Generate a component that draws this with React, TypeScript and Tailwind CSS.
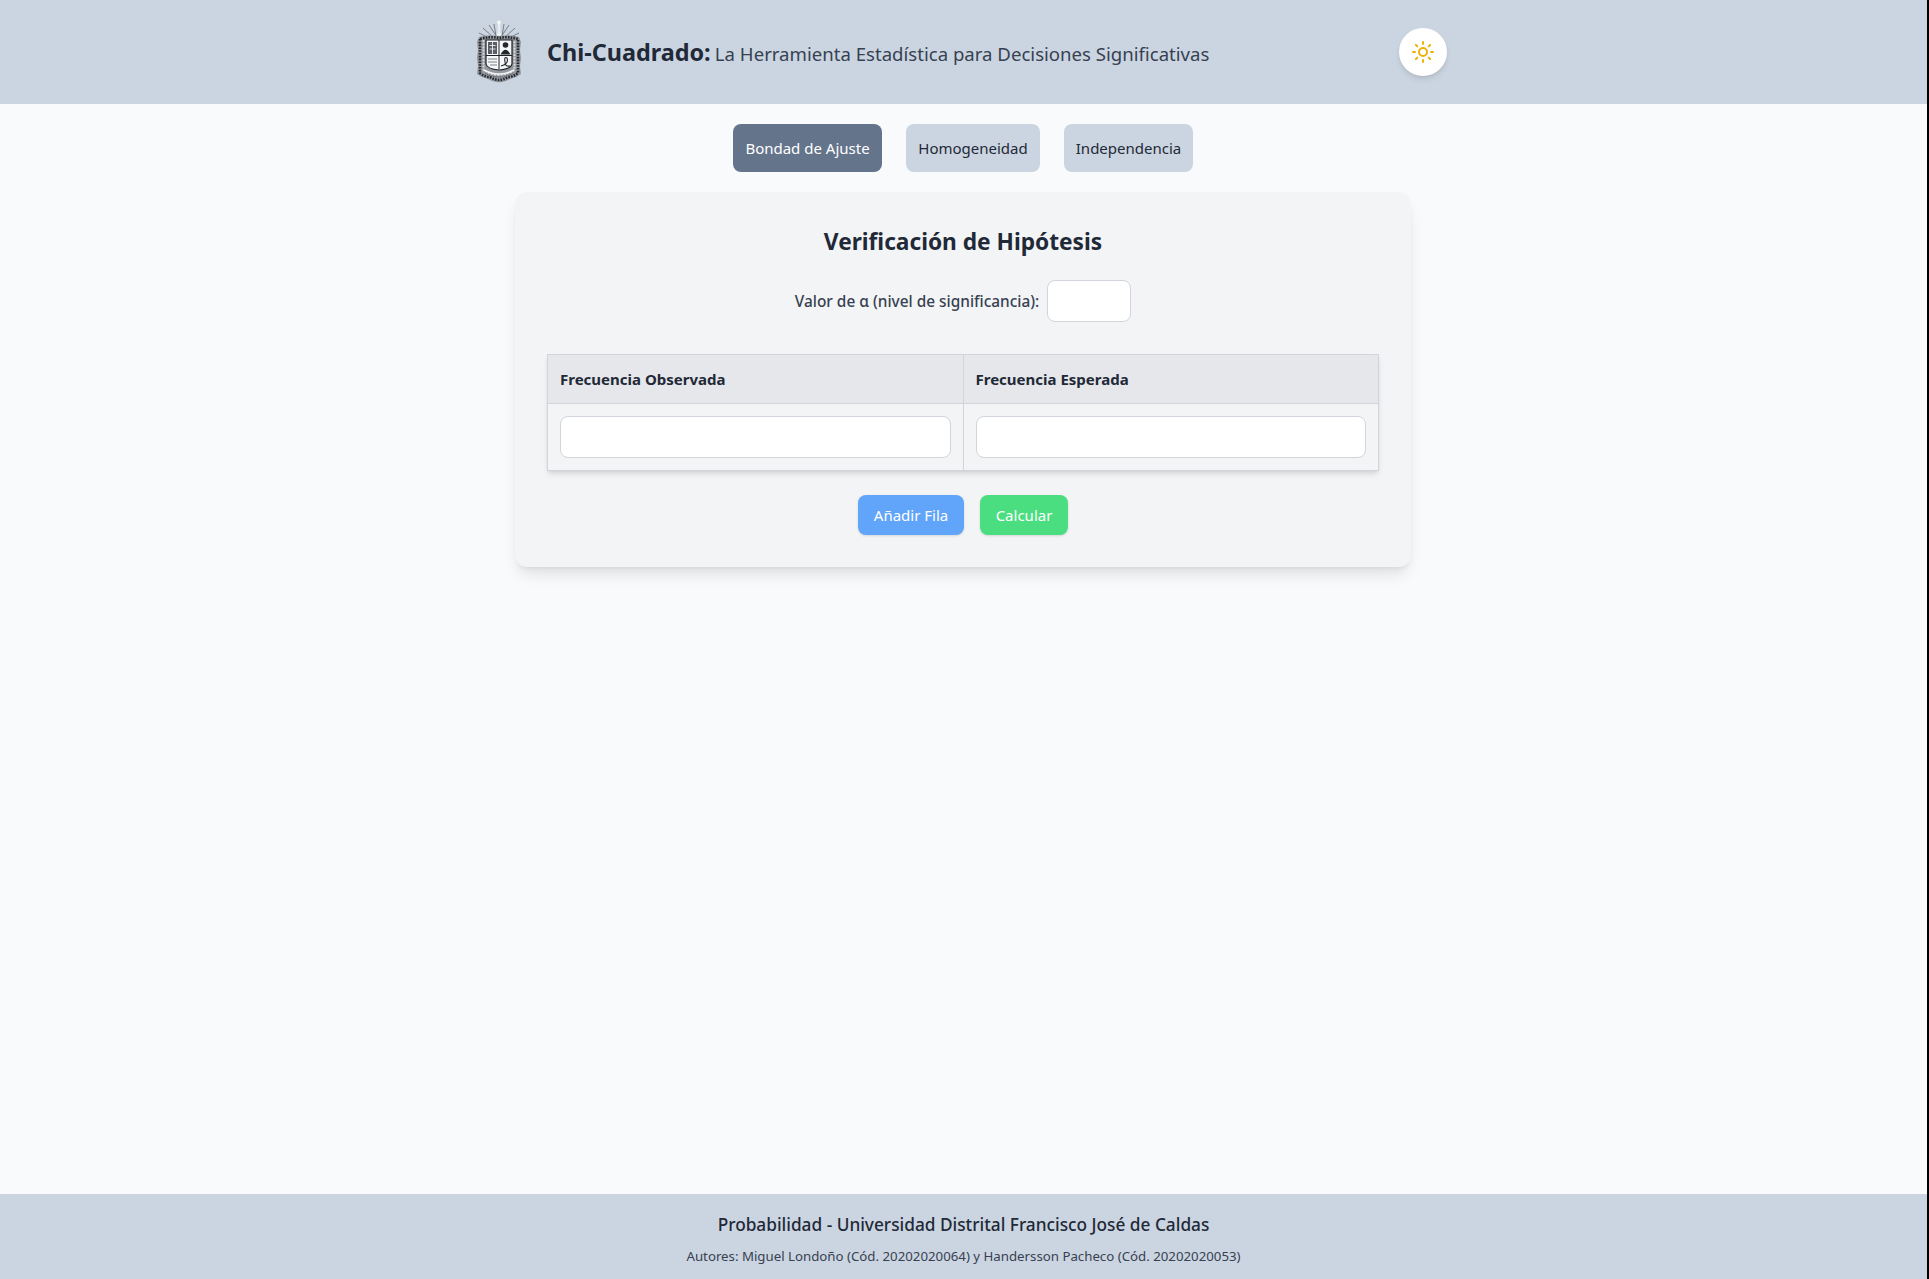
import { Sun } from "lucide-react";

function Crest() {
  return (
    <svg viewBox="0 0 46 64" className="h-16 w-[46px]" fill="none">
      {/* rays */}
      <g stroke="#70757c" strokeWidth="0.9">
        <path d="M21 17 L13 5 M25 17 L33 5 M18 18 L7 8 M28 18 L39 8 M15 19 L3 13 M31 19 L43 13 M20 16 L18 4 M26 16 L28 4" />
      </g>
      <path d="M23 18 L23 4" stroke="#e9edf2" strokeWidth="2.4" />
      <circle cx="23" cy="2.5" r="2" fill="#f3f4f6" />
      <circle cx="23" cy="15" r="2.4" fill="#eef1f4" />
      {/* ornate frame */}
      <path
        d="M3 17 Q12 14 23 16 Q34 14 43 17 L45 22 L44 30 L45 38 L44 46 L45 54 Q40 58 34 59 Q28 63 23 62 Q18 63 12 59 Q6 58 1 54 L2 46 L1 38 L2 30 L1 22 Z"
        fill="#93979e"
      />
      <path
        d="M4 19 L4 53 Q9 57 14 57 Q19 60 23 60 Q27 60 32 57 Q37 57 42 53 L42 19 Q32 16 23 18 Q14 16 4 19 Z"
        stroke="#25282c"
        strokeWidth="2.6"
        strokeDasharray="1.6 1.2"
      />
      <path
        d="M7.5 20 L7.5 50 Q13 54 23 55 Q33 54 38.5 50 L38.5 20"
        stroke="#d9dbdf"
        strokeWidth="1.8"
        strokeDasharray="2 1.2"
      />
      {/* shield */}
      <path d="M10 20 L36 20 L36 44 Q35 49 23 50 Q11 49 10 44 Z" fill="#f6f7f8" stroke="#1f2226" strokeWidth="1.2" />
      <path d="M23 20 L23 49 M10 35.5 L36 35.5" stroke="#1f2226" />
      <rect x="12" y="22" width="9" height="12" fill="#5a5f66" />
      <path d="M13.5 25.5 L19.5 25.5 M13.5 29 L19.5 29 M16.5 22 L16.5 34" stroke="#eceef0" strokeWidth="0.9" />
      <circle cx="29.5" cy="25" r="2.8" fill="#23262a" />
      <path d="M24.5 34.5 Q29.5 25 34.5 34.5 Z" fill="#23262a" />
      <path d="M12 39 L21 39 M12 42 L21 42 M14 45 L21 45" stroke="#7b8087" />
      <path d="M25 46 Q33 44 31 38 Q28 36 29 42 Q29 47 34 46" stroke="#1f2226" strokeWidth="1.1" />
      {/* scroll */}
      <path d="M8 50 Q23 58 38 50" stroke="#f0f1f3" strokeWidth="1.6" />
      <path d="M9 53 Q23 61 37 53" stroke="#4b4f55" strokeWidth="1" strokeDasharray="1.2 1" />
    </svg>
  );
}

function App() {
  return (
    <div className="bg-black pr-[2px]">
      <div
        className="flex min-h-screen flex-col bg-[#f9fafc] text-[#1f2937]"
        style={{ fontFamily: '"Noto Sans", sans-serif' }}
      >
        <header className="flex h-[104px] justify-center bg-[#cbd5e1] pr-1">
          <div className="flex w-[971px] items-center justify-between">
            <div className="flex items-center gap-[25px]">
              <Crest />
              <h1 className="pt-[3px] leading-8">
                <span className="text-[23.4px] font-bold">Chi-Cuadrado:</span>{" "}
                <span className="text-[18.6px] text-[#374151]">
                  La Herramienta Estadística para Decisiones Significativas
                </span>
              </h1>
            </div>
            <button className="flex h-12 w-12 items-center justify-center rounded-full bg-white shadow-md">
              <Sun className="h-6 w-6 text-[#eab308]" />
            </button>
          </div>
        </header>

        <main className="flex flex-1 flex-col items-center pt-5 pr-[1px]">
          <nav className="flex gap-6">
            <button className="h-12 w-[149px] rounded-lg bg-[#64748b] text-[15px] text-white">
              Bondad de Ajuste
            </button>
            <button className="h-12 w-[134px] rounded-lg bg-[#cbd5e1] text-[15px] text-[#1f2937]">
              Homogeneidad
            </button>
            <button className="h-12 w-[129px] rounded-lg bg-[#cbd5e1] text-[15px] text-[#1f2937]">
              Independencia
            </button>
          </nav>

          <section className="mt-5 flex w-[896px] flex-col items-center rounded-xl bg-[#f3f4f6] p-8 shadow-lg">
            <h2 className="pt-[1px] text-[22.7px] leading-[34px] font-bold">Verificación de Hipótesis</h2>
            <div className="mt-[21px] flex items-center gap-2">
              <label className="pt-[1px] text-[15.4px] font-medium text-[#374151]">
                Valor de α (nivel de significancia):
              </label>
              <input className="h-[42px] w-[84px] rounded-lg border border-[#d1d5db] bg-white" />
            </div>

            <table className="mt-8 w-full table-fixed border-collapse shadow-md">
              <thead>
                <tr className="h-[49px] bg-[#e5e7eb] text-left text-[15px] font-bold">
                  <th className="border border-[#d1d5db] px-3">Frecuencia Observada</th>
                  <th className="border border-[#d1d5db] px-3">Frecuencia Esperada</th>
                </tr>
              </thead>
              <tbody>
                <tr className="h-[67px]">
                  <td className="border border-[#d1d5db] px-3">
                    <input className="block h-[42px] w-full rounded-lg border border-[#d1d5db] bg-white" />
                  </td>
                  <td className="border border-[#d1d5db] px-3">
                    <input className="block h-[42px] w-full rounded-lg border border-[#d1d5db] bg-white" />
                  </td>
                </tr>
              </tbody>
            </table>

            <div className="mt-6 flex gap-4">
              <button className="h-10 w-[106px] rounded-lg bg-[#60a5fa] text-[15px] text-white shadow-sm">
                Añadir Fila
              </button>
              <button className="h-10 w-[88px] rounded-lg bg-[#4ade80] text-[15px] text-white shadow-sm">
                Calcular
              </button>
            </div>
          </section>
        </main>

        <footer className="flex h-[85px] flex-col items-center bg-[#cbd5e1] pt-[19px]">
          <p className="text-[17.25px] leading-6 font-medium">
            Probabilidad - Universidad Distrital Francisco José de Caldas
          </p>
          <p className="mt-[9px] text-[13.25px] leading-5 text-[#374151]">
            Autores: Miguel Londoño (Cód. 20202020064) y Handersson Pacheco (Cód. 20202020053)
          </p>
        </footer>
      </div>
    </div>
  );
}

export default App;
